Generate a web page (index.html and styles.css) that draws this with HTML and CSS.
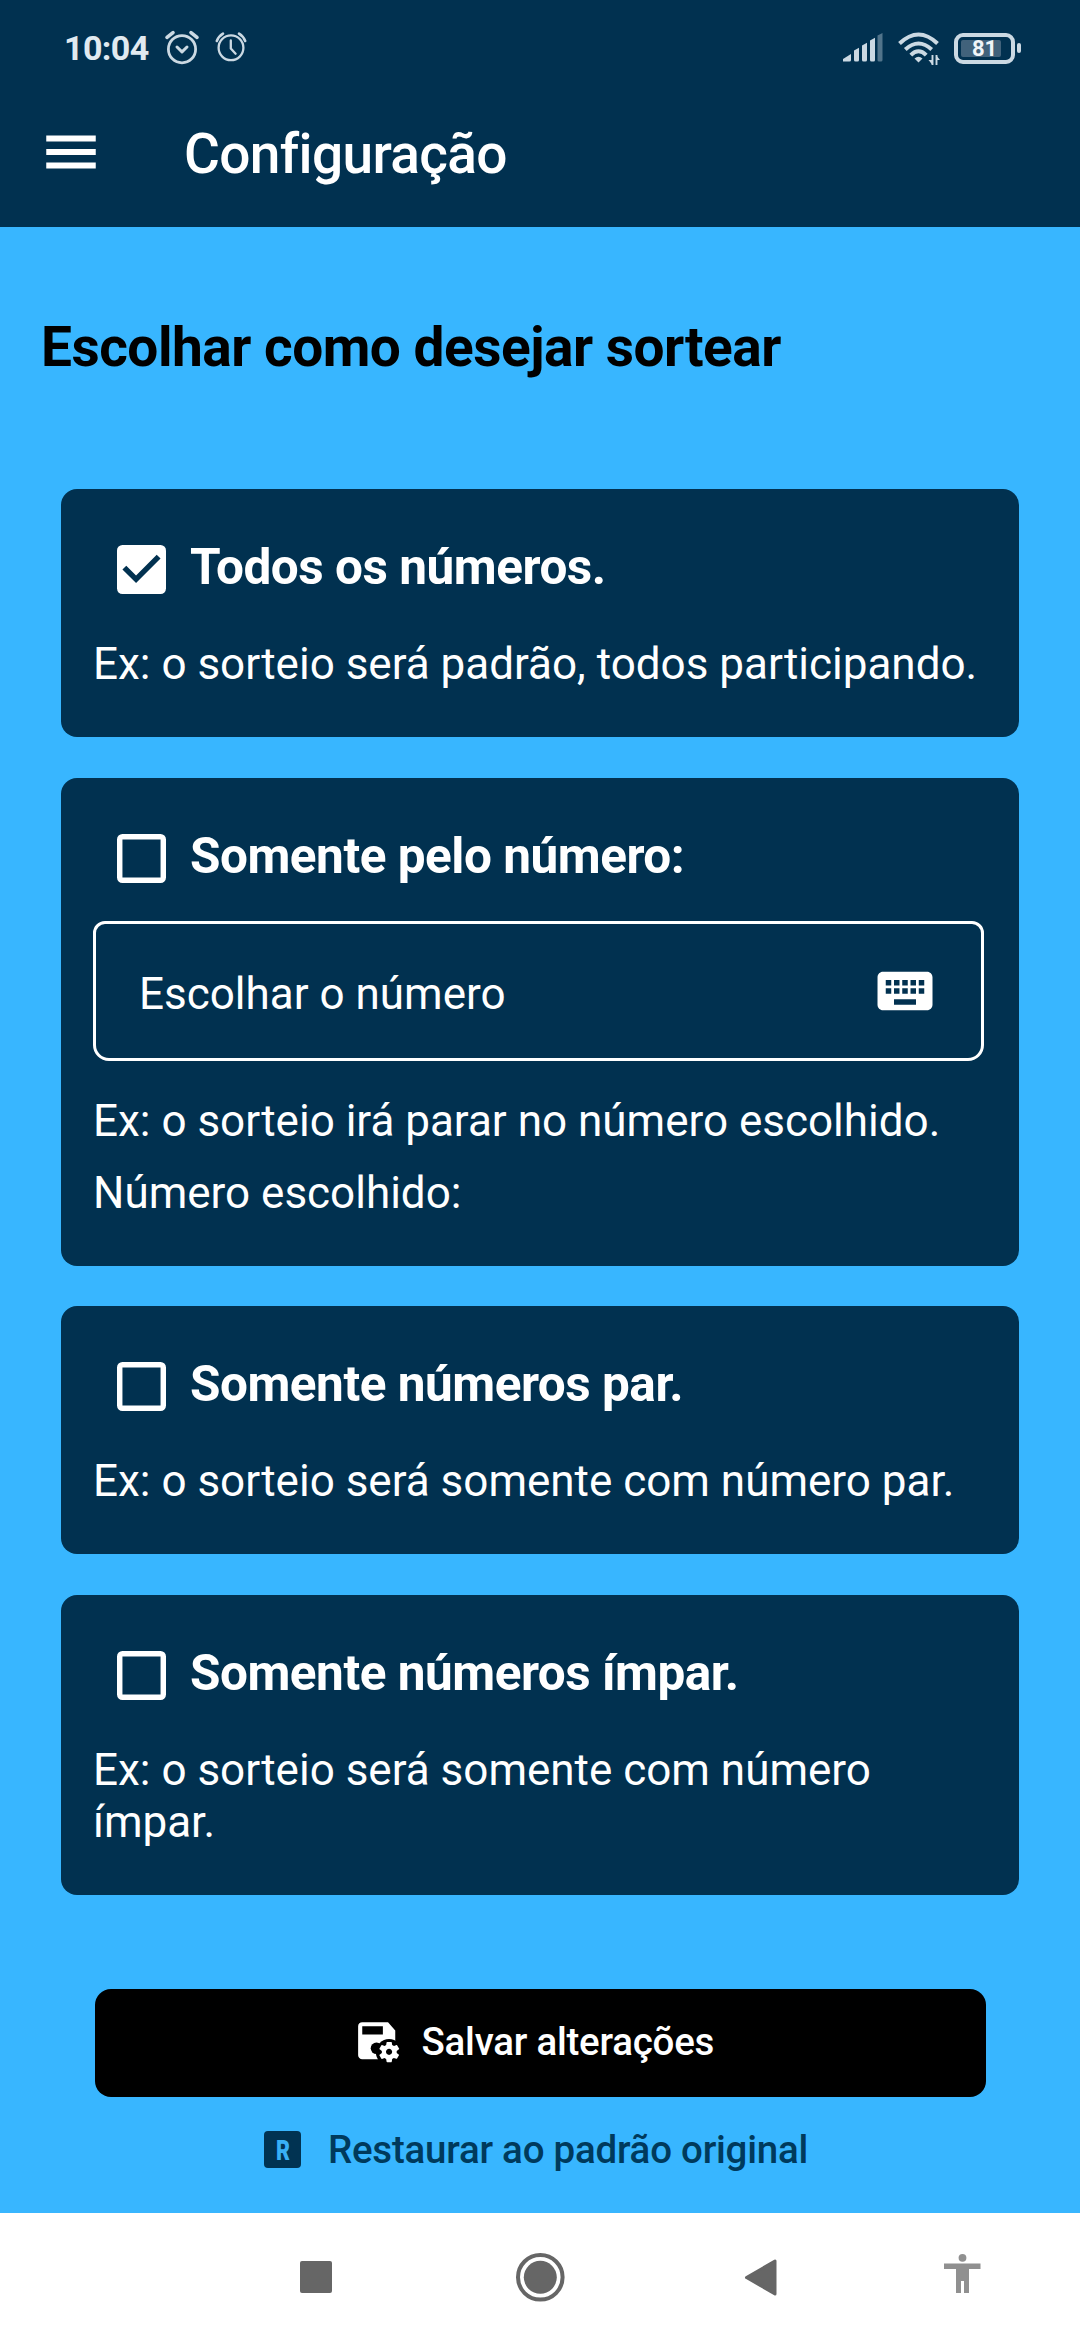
FILE: index.html
```html
<!DOCTYPE html>
<html lang="pt-BR">
<head>
<meta charset="utf-8">
<title>Configuração</title>
<link rel="stylesheet" href="styles.css">
</head>
<body>
<div class="screen">
  <header class="header">
    <div class="status">
      <span class="clock">10:04</span>
      <svg class="alarm-a" width="36" height="36" viewBox="0 0 36 36" fill="none" stroke="#cbd9e3" stroke-linecap="round" stroke-linejoin="round">
        <circle cx="18" cy="19.2" r="13.6" stroke-width="2.8"/>
        <path d="M13 17l5 4.800 5-4.800" stroke-width="3"/>
        <path d="M3 7.400L9 2.600M33 7.400L27 2.600" stroke-width="3.600"/>
      </svg>
      <svg class="alarm-b" width="32" height="32" viewBox="0 0 32 32" fill="none" stroke="#cbd9e3" stroke-linecap="round" stroke-linejoin="round">
        <circle cx="16" cy="16.800" r="12.400" stroke-width="2.300"/>
        <path d="M15.800 9.500v8l4.800 5.200" stroke-width="2.300"/>
        <path d="M1.800 10Q3.600 5.200 8 2.600M30.200 10Q28.400 5.200 24 2.600" stroke-width="2.600"/>
      </svg>
      <div class="status-right">
        <svg class="signal" width="40" height="29" viewBox="0 0 40 29" fill="#cbd9e3">
          <path d="M0 28.500V26L8 21v6q0 1.500-1.500 1.500z"/>
          <path d="M11 17.500l5-2.800v12.300q0 1.500-1.500 1.500h-2q-1.500 0-1.500-1.500z"/>
          <path d="M19 12.500l5-2.800v17.300q0 1.500-1.500 1.500h-2q-1.500 0-1.500-1.500z"/>
          <path d="M27 7.500l5-2.800v22.300q0 1.500-1.500 1.500h-2q-1.500 0-1.500-1.500z"/>
          <path d="M34.500 2.500l5-2.500v27q0 1.500-1.500 1.500h-2q-1.500 0-1.500-1.500z" opacity=".4"/>
        </svg>
        <svg class="wifi" width="42" height="34" viewBox="0 0 42 34" fill="none" stroke="#cbd9e3" stroke-width="4">
          <path d="M1.500 11.500Q20.500-6.500 39.500 11.500"/>
          <path d="M7.300 17.500Q20.500 5.500 33.700 17.500"/>
          <path d="M12.800 23.200Q20.500 15.500 28.200 23.200"/>
          <path d="M20.500 30.500l-4-4q4-3.500 8 0z" fill="#cbd9e3" stroke="none"/>
          <path d="M34.500 23v10M38.500 23v10" stroke-width="1.900"/>
          <path d="M30.500 28h4v5zM42 28h-4v-5z" fill="#cbd9e3" stroke="none"/>
        </svg>
        <div class="battery"><span class="battery-fill">81</span></div>
        <span class="battery-tip"></span>
      </div>
    </div>
    <div class="appbar">
      <svg width="66" height="66" viewBox="0 0 24 24" fill="#fff"><path d="M3 18h18v-2.200H3zM3 13.100h18v-2.200H3zM3 6v2.200h18V6z"/></svg>
      <h1 class="title">Configuração</h1>
    </div>
  </header>

  <main class="content">
    <h2 class="heading">Escolhar como desejar sortear</h2>

    <section class="card card-single">
      <div class="option">
        <svg class="box" viewBox="3 3 18 18"><path fill="#fff" d="M19 3H5a2 2 0 0 0-2 2v14a2 2 0 0 0 2 2h14a2 2 0 0 0 2-2V5a2 2 0 0 0-2-2z"/><path fill="#013150" d="M10 17l-5-5 1.410-1.410L10 14.170l7.590-7.590L19 8z"/></svg>
        <span class="label">Todos os números.</span>
      </div>
      <p class="note">Ex: o sorteio será padrão, todos participando.</p>
    </section>

    <section class="card card-input">
      <div class="option">
        <svg class="box" viewBox="3 3 18 18"><rect x="4" y="4" width="16" height="16" rx="1" fill="none" stroke="#fff" stroke-width="2"/></svg>
        <span class="label">Somente pelo número:</span>
      </div>
      <div class="field">
        <span class="field-text">Escolhar o número</span>
        <svg width="66" height="66" viewBox="0 0 24 24" fill="#fff"><path d="M20 5H4c-1.100 0-1.990.900-1.990 2L2 17c0 1.100.900 2 2 2h16c1.100 0 2-.900 2-2V7c0-1.100-.900-2-2-2zm-9 3h2v2h-2V8zm0 3h2v2h-2v-2zM8 8h2v2H8V8zm0 3h2v2H8v-2zm-1 2H5v-2h2v2zm0-3H5V8h2v2zm9 7H8v-2h8v2zm0-4h-2v-2h2v2zm0-3h-2V8h2v2zm3 3h-2v-2h2v2zm0-3h-2V8h2v2z"/></svg>
      </div>
      <p class="note">Ex: o sorteio irá parar no número escolhido.</p>
      <p class="note note-second">Número escolhido:</p>
    </section>

    <section class="card card-single">
      <div class="option">
        <svg class="box" viewBox="3 3 18 18"><rect x="4" y="4" width="16" height="16" rx="1" fill="none" stroke="#fff" stroke-width="2"/></svg>
        <span class="label">Somente números par.</span>
      </div>
      <p class="note">Ex: o sorteio será somente com número par.</p>
    </section>

    <section class="card card-double">
      <div class="option">
        <svg class="box" viewBox="3 3 18 18"><rect x="4" y="4" width="16" height="16" rx="1" fill="none" stroke="#fff" stroke-width="2"/></svg>
        <span class="label">Somente números ímpar.</span>
      </div>
      <p class="note">Ex: o sorteio será somente com número ímpar.</p>
    </section>

    <div class="save">
      <svg class="save-icon" width="49.500" height="49.500" viewBox="0 0 24 24" fill="#fff">
        <path d="M4 2h12.500L20 6v12a2 2 0 0 1-2 2H4a2 2 0 0 1-2-2V4a2 2 0 0 1 2-2zM4 4v4h10V4z" fill-rule="evenodd"/>
        <circle cx="10.900" cy="14.700" r="2.800" fill="#000"/>
        <circle cx="17" cy="16.600" r="6.400" fill="#000"/>
        <path transform="translate(-2 -2.600)" d="M23.800 20.400C23.900 20.400 23.900 20.500 23.800 20.600L22.800 22.300C22.700 22.400 22.600 22.400 22.500 22.400L21.300 22C21 22.200 20.800 22.300 20.500 22.500L20.300 23.800C20.300 23.900 20.200 24 20.100 24H18.100C18 24 17.900 23.900 17.800 23.800L17.600 22.500C17.300 22.400 17 22.200 16.800 22L15.600 22.500C15.500 22.500 15.400 22.500 15.300 22.400L14.300 20.700C14.200 20.600 14.300 20.500 14.400 20.400L15.500 19.600V18.600L14.400 17.800C14.300 17.700 14.300 17.600 14.300 17.500L15.300 15.800C15.400 15.700 15.500 15.700 15.600 15.700L16.800 16.200C17.100 16 17.300 15.900 17.600 15.700L17.800 14.400C17.800 14.300 17.900 14.200 18.100 14.200H20.100C20.200 14.200 20.300 14.300 20.300 14.400L20.500 15.700C20.800 15.800 21.100 16 21.400 16.200L22.600 15.700C22.700 15.700 22.900 15.700 22.900 15.800L23.900 17.500C24 17.600 23.900 17.700 23.800 17.800L22.700 18.600V19.600L23.800 20.400M20.500 19C20.500 18.200 19.800 17.500 19 17.500S17.500 18.200 17.500 19 18.200 20.500 19 20.500 20.500 19.800 20.500 19"/>
      </svg>
      <span class="save-text">Salvar alterações</span>
    </div>
    <div class="restore">
      <svg class="restore-icon" width="37" height="37" viewBox="0 0 37 37"><rect width="37" height="37" rx="4" fill="#013352"/><text class="restore-letter" x="12" y="29" textLength="14" lengthAdjust="spacingAndGlyphs">R</text></svg>
      <span class="restore-text">Restaurar ao padrão original</span>
    </div>
  </main>

  <nav class="navbar">
    <svg width="1080" height="127" viewBox="0 2213 1080 127" fill="#666">
      <rect x="300" y="2261" width="32" height="32" rx="2"/>
      <circle cx="540.300" cy="2277.300" r="22.300" fill="none" stroke="#666" stroke-width="4"/>
      <circle cx="540.300" cy="2277.300" r="16.500"/>
      <path d="M746.500 2277.500L775 2261v33z" stroke="#666" stroke-width="3" stroke-linejoin="round"/>
      <g fill="#909090"><circle cx="962.500" cy="2257.800" r="3.900"/><path d="M944 2263.500h36.500v5.500H969v24h-5v-12h-3v12h-5v-24h-12z"/></g>
    </svg>
  </nav>
</div>
</body>
</html>
```

FILE: styles.css
```css
* { box-sizing: border-box; margin: 0; padding: 0; }
body { font-family: Roboto, "Liberation Sans", sans-serif; }
svg { display: block; flex: none; }

.screen { width: 1080px; height: 2340px; display: flex; flex-direction: column; background: #38b6ff; overflow: hidden; }

.header { height: 227px; background: #013150; }
.status { height: 96px; padding: 0 59px 0 64px; display: flex; align-items: center; }
.clock { width: 85px; font-size: 34px; line-height: 40px; font-weight: 700; letter-spacing: -0.6px; color: #e1eaf0; white-space: nowrap; }
.alarm-a { margin-left: 15px; }
.alarm-b { margin-left: 15px; margin-top: -2px; }
.status-right { display: flex; align-items: center; margin-left: auto; }
.signal { margin-right: 15px; margin-top: -2px; }
.wifi { margin-right: 14px; margin-top: 1px; }
.battery { width: 61px; height: 31px; border: 4px solid #cbd9e3; border-radius: 9px; padding: 3px; }
.battery-fill { display: block; width: 40px; height: 17px; border-radius: 2px; background: #41627b; color: #f0f5f8; font-size: 22px; line-height: 18px; font-weight: 700; padding-left: 11px; }
.battery-tip { width: 4px; height: 10px; margin-left: 2px; border-radius: 2px; background: #cbd9e3; }

.appbar { display: flex; align-items: center; height: 111px; padding-left: 38px; }
.title { margin: 5px 0 0 80px; font-size: 55px; line-height: 64px; font-weight: 500; letter-spacing: -0.65px; color: #fff; }

.content { height: 1986px; padding: 0 61px; display: flex; flex-direction: column; }
.heading { margin: 88px 0 0 -20px; height: 174px; font-size: 55px; line-height: 64px; font-weight: 700; letter-spacing: -0.5px; color: #000; white-space: nowrap; }

.card { background: #013150; border-radius: 16px; padding: 48px 32px 0; margin-bottom: 41px; flex: none; color: #fff; }
.card-single { height: 248px; }
.card-input { height: 488px; margin-bottom: 40px; }
.card-double { height: 300px; margin-bottom: 94px; }
.option { display: flex; align-items: center; height: 64px; padding-left: 24px; }
.box { width: 49px; height: 49px; margin-top: 1px; }
.label { margin: -4px 0 0 24px; font-size: 49.5px; line-height: 58px; font-weight: 700; letter-spacing: -0.48px; white-space: nowrap; }
.note { margin-top: 37px; font-size: 44px; line-height: 52px; }
.note-second { margin-top: 20px; }
.field { display: flex; align-items: center; justify-content: space-between; width: 891px; height: 140px; margin-top: 31px; padding: 0 43px 0 43px; border: 3px solid #fff; border-radius: 12px 12px 16px 16px; }
.field-text { font-size: 44px; line-height: 52px; padding-top: 5px; }
.card-input .field + .note { margin-top: 34px; }

.save { display: flex; align-items: center; flex: none; width: 891px; height: 108px; margin-left: 34px; padding-left: 259px; border-radius: 16px; background: #000; color: #fff; }
.save-text { margin: -3px 0 0 18px; font-size: 38.5px; font-weight: 500; letter-spacing: -0.24px; white-space: nowrap; }
.restore { display: flex; align-items: center; height: 104px; padding-left: 203px; color: #003a5c; }
.restore-text { margin-left: 27px; font-size: 38.5px; font-weight: 500; letter-spacing: -0.24px; white-space: nowrap; }
.restore-letter { font-size: 28.5px; font-weight: 900; fill: #38b0f6; }

.navbar { height: 127px; background: #fff; }
```
